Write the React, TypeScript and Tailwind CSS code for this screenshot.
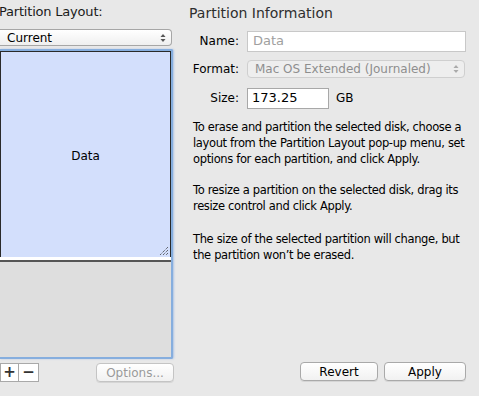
import React from "react";

const font = { fontFamily: '"DejaVu Sans", "Lucida Grande", sans-serif' };

function Stepper({ color = "#555" }: { color?: string }) {
  return (
    <svg width="6" height="10" viewBox="0 0 6 10">
      <path d="M0.5 4 L3 1 L5.5 4 Z" fill={color} />
      <path d="M0.5 6 L3 9 L5.5 6 Z" fill={color} />
    </svg>
  );
}

function Btn({ children, disabled }: { children: React.ReactNode; disabled?: boolean }) {
  return (
    <div
      className={`h-[19px] rounded-[4px] border border-[#a9a9a9] bg-gradient-to-b from-[#ffffff] to-[#f1f1f1] shadow-[0_1px_0_rgba(0,0,0,0.08)] flex items-center justify-center text-[12px] ${
        disabled ? "text-[#9a9a9a] border-[#c4c4c4]" : "text-black"
      }`}
    >
      {children}
    </div>
  );
}

export default function App() {
  return (
    <div className="w-[479px] h-[396px] bg-[#e8e8e8] overflow-hidden flex" style={font}>
      {/* Left column */}
      <div className="w-[176px] flex flex-col">
        <div className="h-[26px] pt-[3px] text-[13px] text-[#1a1a1a] leading-[18px] -ml-[1px] tracking-[-0.2px]">Partition Layout:</div>
        <div className="mt-[3px] w-[172px] h-[17px] rounded-r-[4px] border border-[#a6a6a6] border-l-0 bg-gradient-to-b from-[#ffffff] to-[#efefef] flex items-center justify-between pl-[7px] pr-[5px] text-[12px] text-black leading-none">
          <span>Current</span>
          <Stepper />
        </div>
        <div className="mt-[3px] w-[173px] h-[310px] border-[2px] border-[#86aede] border-l-0 rounded-r-[2px] shadow-[1px_0_2px_rgba(70,130,220,0.35)] flex flex-col bg-[#dcdcdc]">
          <div className="h-[206px] bg-[#d3dffc] border-t border-l border-r border-[#2a2a2a] relative flex items-center justify-center text-[12px] text-black">
            <span className="mt-[2px]">Data</span>
            <svg className="absolute right-[1px] bottom-[1px]" width="10" height="10" viewBox="0 0 10 10">
              <path d="M9 1 L1 9 M9 4 L4 9 M9 7 L7 9" stroke="#333" strokeWidth="1" strokeDasharray="1 1" />
            </svg>
          </div>
          <div className="h-[3px] bg-white" />
          <div className="h-[2px] bg-[#555]" />
          <div className="flex-1 bg-[#dedede]" />
        </div>
        <div className="mt-[4px] flex items-center">
          <div className="flex h-[19px] border border-[#a9a9a9] bg-white">
            <div className="w-[18px] flex items-center justify-center border-r border-[#a9a9a9] text-[15px] font-bold text-[#333] leading-none">+</div>
            <div className="w-[19px] flex items-center justify-center text-[15px] font-bold text-[#333] leading-none">−</div>
          </div>
          <div className="ml-[57px] w-[78px]">
            <Btn disabled>Options...</Btn>
          </div>
        </div>
      </div>

      {/* Right column */}
      <div className="flex-1 flex flex-col pl-[13px]">
        <div className="pt-[4px] h-[27px] text-[14px] text-[#2e2e2e] leading-[18px]">Partition Information</div>
        <div className="flex items-center mt-[3px] h-[22px]">
          <div className="w-[50px] text-right text-[12px] text-black">Name:</div>
          <div className="ml-[8px] w-[219px] h-[21px] bg-white border border-[#c8c8c8] flex items-center pl-[5px] text-[13px] text-[#a0a0a0]">Data</div>
        </div>
        <div className="flex items-center mt-[7px] h-[19px]">
          <div className="w-[50px] text-right text-[12px] text-black">Format:</div>
          <div className="ml-[8px] w-[218px] h-[18px] rounded-[4px] border border-[#cfcfcf] bg-[#eeeeee] flex items-center justify-between pl-[7px] pr-[5px] text-[12px] text-[#8e8e8e]">
            <span>Mac OS Extended (Journaled)</span>
            <Stepper color="#aaa" />
          </div>
        </div>
        <div className="flex items-center mt-[9px] h-[22px]">
          <div className="w-[50px] text-right text-[12px] text-black">Size:</div>
          <div className="ml-[8px] w-[82px] h-[21px] bg-white border border-[#a8a8a8] flex items-center pl-[4px] text-[13px] text-black">173.25</div>
          <div className="ml-[7px] text-[12px] text-black">GB</div>
        </div>
        <div className="mt-[10px] pl-[4px] text-[11.5px] leading-[16px] tracking-[-0.35px] text-black">
          <p>To erase and partition the selected disk, choose a layout from the Partition Layout pop-up menu, set options for each partition, and click Apply.</p>
          <p className="mt-[15px]">To resize a partition on the selected disk, drag its resize control and click Apply.</p>
          <p className="mt-[17px]">The size of the selected partition will change, but the partition won’t be erased.</p>
        </div>
        <div className="mt-auto mb-[15px] flex">
          <div className="ml-[111px] w-[78px]">
            <Btn>Revert</Btn>
          </div>
          <div className="ml-[6px] w-[82px]">
            <Btn>Apply</Btn>
          </div>
        </div>
      </div>
    </div>
  );
}
